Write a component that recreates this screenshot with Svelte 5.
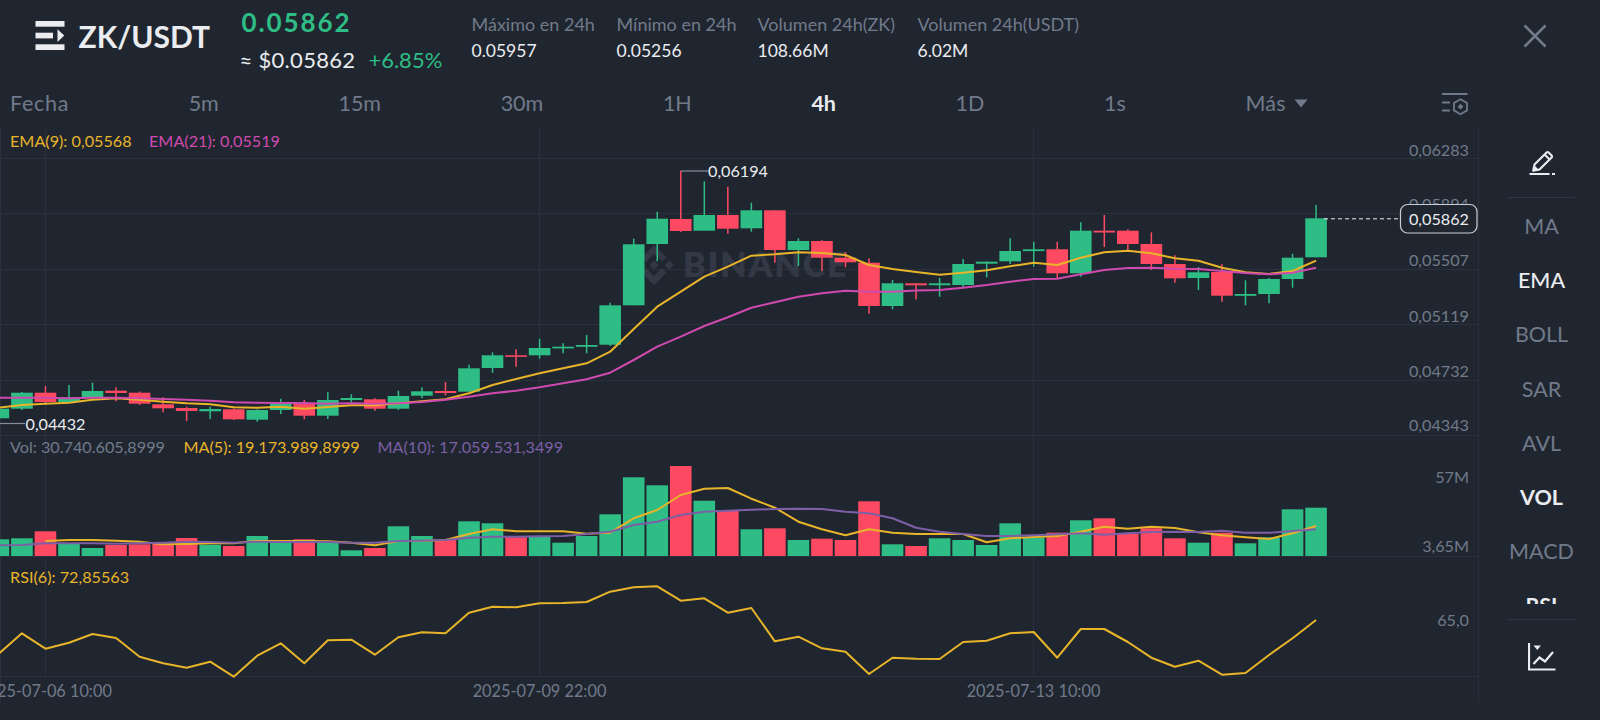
<script>
  const STEP = 23.53;
  const X0 = -1.6;
  const cx = (i) => +(X0 + STEP * i).toFixed(2);
  // [colour, wick top, body top, body bottom, wick bottom]
  const candles = [
    ['g',406,408.7,418.3,420],['g',392,392.7,408.7,410],['r',386,392.7,402,404.7],['g',385,397.3,402,403],
    ['g',382.7,391,397.3,399.3],['r',387.3,390.7,393,401.3],['r',391.5,392.7,403.7,405],['r',397.3,404.3,408.3,412.3],
    ['r',406.7,408,411,421],['g',406.7,409,411.3,419],['r',408.5,409.3,419.3,420],['g',409.3,410,419.7,421.7],
    ['g',398.7,403.3,410,414],['r',400,403,415.7,419.3],['g',392.3,400,415.7,419],['g',394.3,398,400,402.7],
    ['r',398.3,399.3,408.7,410.7],['g',390.7,396,408.7,410],['g',387.3,391.3,395.7,398.3],['r',382,391,393,395.3],
    ['g',364.7,368.3,391.7,392],['g',352.3,355.3,368,372.7],['r',349.3,355.3,356.9,366.7],['g',338.7,348,355.3,358.7],
    ['g',343.3,346.7,348.4,353.3],['g',335,345,346.8,353.3],['g',302.7,305.3,344.7,346],['g',238.7,244.3,305.3,305.3],
    ['g',211.7,218.7,244,261.3],['r',170.7,219,231,232],['g',181.3,215,230.7,230.7],['r',186.7,215,228.7,233.7],
    ['g',202.7,210.3,228.3,231.7],['r',210.3,210.3,250,262.7],['g',238.3,241,250,266],['r',240,241,257.7,271],
    ['r',252,257.7,262.3,267.3],['r',258.3,262.7,306,313.7],['g',280,283.3,306,309.3],['r',283.3,283.3,285.3,299.5],
    ['g',278,283.3,285.2,296.7],['g',259,264,285,287.3],['g',261.7,261.7,263.7,277.3],['g',238.3,251,261.3,264],
    ['g',241.7,249.3,251.1,266.7],['r',241.7,249.3,273.3,278.7],['g',222.3,230.7,273.3,276.7],['r',215,230.7,232.5,247],
    ['r',229.3,230.7,244,250],['r',232.3,244,264,270],['r',255.3,264,278.3,282.7],['g',267,272.3,278,290],
    ['r',264,272,295.7,301.7],['g',280.3,294,295.8,305.3],['g',278,279,294,303.3],['g',253.7,257.7,279,287.7],
    ['g',205,218.3,257.3,257.3]
  ];
  const ema9 = [407.7,405,403.7,402.7,399.7,398.3,399.7,401.7,403.3,404.3,407.3,407.7,406.7,408.7,407,405.3,405.3,403.3,401.3,399.3,393.3,385,379,373.3,368.3,363.3,351.7,329,306.7,291.7,276.7,266.7,255.7,254.3,252.3,253,255,265,269,271.9,274.7,272.7,270.3,266.3,262.7,265,257.7,252.3,250.7,253.3,258.3,260.7,267.7,272.3,274,271,260.7];
  const ema21 = [397.7,397.7,397.7,398.3,397.7,397.7,398.3,399,399.7,400.7,402.3,402.7,403,403,403.7,403.3,403.7,403.3,402,399.7,396.7,393.3,390.7,387.3,383.3,379.3,372.7,360,346.7,336.7,326,317.3,307.7,302.3,296.7,293.3,290.7,291.7,291.7,290.5,290,287.7,285,281.7,279,278.7,274.3,270,268,267.7,268.7,269,271,273,274.3,272.7,267.7];
  const volTop = [539.3,538.3,531.3,543.3,548,545,544.3,543.7,538,544.7,546,536,542.7,539.3,542.7,550.3,548,526.3,536,540,521.3,523.3,537.3,537,542.7,536,514.3,477.3,485.3,466,500.7,510.7,529.3,528.3,540,538.7,540,501.3,544.3,546,538.3,540,545,523.3,537.3,532.7,520.3,518.3,534,528.3,538.3,542.7,532.7,543.3,537.3,509.3,507.7];
  const ma5v = [null,null,243,240,240,242,245,253,252,250,250,243,243,243,244,248,256,243,243,240,222,208,214,214,214,221,218,175,150,105,86,84,116,143,185,208,226,208,218,222,222,222,247,235,231,228,215,200,206,200,204,217,226,232,237,220,198];
  const ma10v = [256,255,250,250,250,251,250,248,245,246,248,245,246,246,246,248,248,243,242,240,233,230,230,229,228,222,215,195,185,165,155,152,149,147,146,147,155,160,175,203,215,222,228,228,226,223,220,224,220,216,215,216,212,218,218,213,208];
  const rsiv = [252,190,236,218,192,204,260,280,293,275,320,257,220,280,211,209,254,202,187,190,128,110,112,100,99,96,65,52,49,92,85,128,114,214,200,235,245,312,263,266,267,216,212,190,186,263,177,177,216,263,290,272,314,309,255,205,150];

  const pts = (arr, map = (v) => v) =>
    arr.map((v, i) => (v === null ? null : `${cx(i)},${(+map(v)).toFixed(1)}`)).filter(Boolean).join(' ');
  const ema9Pts = pts(ema9);
  const ema21Pts = pts(ema21);
  const ma5Pts = pts(ma5v, (v) => 460 + v / 3);
  const ma10Pts = pts(ma10v, (v) => 460 + v / 3);
  const rsiPts = pts(rsiv, (v) => 570 + v / 3);

  const hLines = [158.5, 213.5, 269.5, 324.5, 380.5, 435.5, 556.5, 676.5];
  const vLines = [45.5, 539.5, 1033.5];
  const priceLabels = [['0,06283',150],['0,05507',260],['0,05119',315.5],['0,04732',371],['0,04343',424.5],['57M',477],['3,65M',546],['65,0',620]];
  const dates = [['2025-07-06 10:00',45],['2025-07-09 22:00',539.5],['2025-07-13 10:00',1033.5]];
  const stats = [['Máximo en 24h','0.05957',145],['Mínimo en 24h','0.05256',141],['Volumen 24h(ZK)','108.66M',160],['Volumen 24h(USDT)','6.02M',170]];
  const frames = ['5m','15m','30m','1H','4h','1D','1s'];
  const tools = [['MA',''],['EMA','on'],['BOLL',''],['SAR',''],['AVL',''],['VOL','on bold'],['MACD',''],['RSI','on bold']];
</script>

<div class="page">
  <header class="head">
    <svg class="logo" width="30" height="30" viewBox="0 0 30 30" aria-hidden="true">
      <g fill="#EAECEF">
        <rect x="0.5" y="0" width="29" height="5.7"/>
        <rect x="0.5" y="11.7" width="17.5" height="5.7"/>
        <path d="M22.5 8.300 29.300 14.600 22.500 21z"/>
        <rect x="0.5" y="23.3" width="29" height="5.7"/>
      </g>
    </svg>
    <div class="pair">ZK/USDT</div>
    <div class="price">
      <div class="last">0.05862</div>
      <div class="sub"><span class="fiat">≈ $0.05862</span><span class="pct">+6.85%</span></div>
    </div>
    <div class="stats">
      {#each stats as [k, v, w]}
        <div class="stat" class:w145={w === 145} class:w141={w === 141}>
          <div class="k">{k}</div>
          <div class="v">{v}</div>
        </div>
      {/each}
    </div>
    <svg class="close" width="24" height="24" viewBox="0 0 24 24" aria-hidden="true">
      <path d="M1.5 1.5 22.5 22.5M22.5 1.5 1.5 22.5" stroke="#707A8A" stroke-width="2.6" fill="none"/>
    </svg>
  </header>

  <nav class="tabs">
    <span class="tab date">Fecha</span>
    {#each frames as f}
      <span class="tab" class:active={f === '4h'}>{f}</span>
    {/each}
    <span class="tab more">Más<svg width="14" height="9" viewBox="0 0 14 9" aria-hidden="true"><path d="M0.5 0.5h13L7 8.5z" fill="#707A8A"/></svg></span>
    <svg class="cfg" width="28" height="26" viewBox="0 0 28 26" aria-hidden="true">
      <g fill="none" stroke="#707A8A" stroke-width="1.8">
        <path d="M1 2h25.5M1 10.5h8M1 18.5h8"/>
        <path d="M19.5 7.2 26 11v7.4l-6.5 3.8-6.500-3.800V11z"/>
      </g>
      <path d="M19.5 11.800l2.900 2.900-2.900 2.900-2.900-2.900z" fill="#707A8A"/>
    </svg>
  </nav>

  <div class="main">
    <svg class="chart" width="1479" height="594" viewBox="0 126 1479 594">
      <g stroke="#2B313C" stroke-width="1">
        {#each hLines as y}<line x1="0" x2="1479" y1={y} y2={y}/>{/each}
        {#each vLines as x}<line x1={x} x2={x} y1="126" y2="676"/>{/each}
        <line x1="0.5" x2="0.5" y1="126" y2="702"/>
        <line x1="1478.5" x2="1478.5" y1="126" y2="702"/>
      </g>

      <g class="wm">
        <path transform="translate(634 245) scale(0.316)" d="M38.730 53.200l24.590-24.580 24.600 24.600 14.300-14.310L63.320 0 24.420 38.900zM0 63.310L14.300 49l14.310 14.310-14.310 14.300zM38.730 73.410l24.590 24.590 24.600-24.600 14.310 14.290-38.900 38.910-38.910-38.880zM98 63.310l14.300-14.310 14.310 14.300-14.300 14.310zM77.830 63.300L63.320 48.780 48.810 63.280l14.510 14.500 14.510-14.470z"/>
        <text x="683" y="276.500">BINANCE</text>
      </g>

      {#each candles as [c, wt, bt, bb, wb], i}
        <line class={c === 'g' ? 'wg' : 'wr'} x1={cx(i)} x2={cx(i)} y1={wt} y2={wb}/>
        <rect class={c} x={cx(i) - 10.8} y={bt} width="21.6" height={bb - bt}/>
      {/each}
      {#each volTop as t, i}
        <rect class={candles[i][0]} x={cx(i) - 10.8} y={t} width="21.6" height={556 - t}/>
      {/each}

      <polyline class="ln c9" points={ema9Pts}/>
      <polyline class="ln c21" points={ema21Pts}/>
      <polyline class="ln c9" points={ma5Pts}/>
      <polyline class="ln c10" points={ma10Pts}/>
      <polyline class="ln c9" points={rsiPts}/>

      <path d="M681 171h27" stroke="#848E9C" stroke-width="1.2" fill="none"/>
      <path d="M0 423.500h25" stroke="#848E9C" stroke-width="1.2" fill="none"/>
      <text class="mark" x="708" y="176.500">0,06194</text>
      <text class="mark" x="25.500" y="430">0,04432</text>

      <text class="leg t9" x="10" y="147">EMA(9): 0,05568</text>
      <text class="leg t21" x="149" y="147">EMA(21): 0,05519</text>
      <text class="leg tg" x="10" y="453">Vol: 30.740.605,8999</text>
      <text class="leg t9" x="183.500" y="453">MA(5): 19.173.989,8999</text>
      <text class="leg t10" x="377.500" y="453">MA(10): 17.059.531,3499</text>
      <text class="leg t9" x="10" y="583">RSI(6): 72,85563</text>

      <text class="ax" x="1469" y="210">0,05894</text>
      {#each priceLabels as [t, y]}
        <text class="ax" x="1469" y={y + 6}>{t}</text>
      {/each}
      {#each dates as [t, x]}
        <text class="datel" x={x} y="697">{t}</text>
      {/each}

      <path d="M1324 218.800H1400" stroke="#EAECEF" stroke-width="1" stroke-dasharray="4 3" fill="none"/>
      <rect class="now" x="1400.500" y="204.500" width="76.500" height="28.500" rx="7"/>
      <text class="nowt" x="1469" y="224.500">0,05862</text>
    </svg>

    <aside class="side">
      <div class="ico top">
        <svg width="26" height="26" viewBox="0 0 26 26" aria-hidden="true">
          <g fill="none" stroke="#EAECEF" stroke-width="2.100" stroke-linejoin="round">
            <path d="M5.500 15.500 17.600 3.400a1.400 1.400 0 0 1 2 0l3 3a1.400 1.400 0 0 1 0 2L10.500 20.500l-6.300 1.300z"/>
            <path d="M15.600 5.400l5 5"/>
          </g>
          <path d="M4.500 21.800l1-5.300 4.300 4.200z" fill="#EAECEF"/>
          <path d="M0.500 25h20M23 25h3" stroke="#EAECEF" stroke-width="2.100"/>
        </svg>
      </div>
      <div class="list">
        {#each tools as [t, c]}
          <div class="tool {c}">{t}</div>
        {/each}
      </div>
      <div class="ico bottom">
        <svg width="28" height="28" viewBox="0 0 28 28" aria-hidden="true">
          <path d="M1 0V26.500H27.500" fill="none" stroke="#EAECEF" stroke-width="2.200"/>
          <path d="M5.500 21 11.500 14.500 17 18.500 25 9" fill="none" stroke="#EAECEF" stroke-width="2.200"/>
          <path d="M5.500 2.500h7.500L9.250 7z" fill="#EAECEF"/>
        </svg>
      </div>
    </aside>
  </div>
</div>

<style>
  :global(body) { margin: 0; background: #202630; }
  .page {
    width: 1600px; height: 720px; overflow: hidden; background: #202630;
    font-family: "Lato", "Liberation Sans", sans-serif; color: #EAECEF;
  }
  .head { height: 84px; display: flex; align-items: flex-start; position: relative; }
  .logo { margin: 21px 0 0 34.500px; flex: none; }
  .pair { margin: 17px 0 0 14px; font-size: 30px; font-weight: 700; line-height: 38px; width: 163px; flex: none; }
  .price { width: 230px; flex: none; }
  .last { margin-top: 4px; font-size: 26px; font-weight: 700; line-height: 36px; color: #2EBD85; letter-spacing: 1.900px; }
  .sub { margin: 5px 0 0 -2px; display: flex; gap: 13px; font-size: 22px; line-height: 30px; }
  .fiat { letter-spacing: .3px; }
  .pct { color: #2EBD85; }
  .stats { display: flex; margin-top: 12px; }
  .stat { width: 160px; }
  .w145 { width: 145px; }
  .w141 { width: 141px; }
  .k { font-size: 18px; line-height: 24px; color: #707A8A; white-space: nowrap; }
  .v { font-size: 17.500px; line-height: 24px; margin-top: 3px; }
  .close { position: absolute; left: 1523px; top: 24px; }
  .tabs {
    height: 42px; width: 1308px; display: flex; justify-content: space-between; align-items: flex-start;
    position: relative; padding-left: 10px; box-sizing: border-box;
  }
  .tab { font-size: 21.500px; line-height: 39px; color: #707A8A; }
  .date { letter-spacing: .7px; }
  .active { color: #EAECEF; font-weight: 700; }
  .more { display: flex; align-items: center; gap: 8px; letter-spacing: .3px; }
  .cfg { position: absolute; left: 1440.500px; top: 8px; }
  .main { display: flex; height: 594px; }
  .chart { flex: none; display: block; width: 1479px; }
  .side { flex: 1; display: flex; flex-direction: column; align-items: center; padding-left: 4px; box-sizing: border-box; }
  .ico { width: 67px; display: flex; justify-content: center; box-sizing: border-box; }
  .top { height: 72px; padding-top: 23px; border-bottom: 1px solid #2F3542; }
  .list { width: 100%; height: 406px; overflow: hidden; padding-top: 1px; box-sizing: border-box; }
  .tool { height: 54.200px; line-height: 54.200px; text-align: center; font-size: 21.500px; color: #707A8A; }
  .tool.on { color: #EAECEF; font-weight: 500; }
  .tool.bold { font-weight: 700; }
  .bottom { border-top: 1px solid #2F3542; padding-top: 23px; height: 60px; margin-top: 15px; }
  .g { fill: #2EBD85; }
  .r { fill: #FD4A62; }
  .wg { stroke: #2EBD85; stroke-width: 1.500; }
  .wr { stroke: #FD4A62; stroke-width: 1.500; }
  .ln { fill: none; stroke-width: 2; stroke-linejoin: round; }
  .c9 { stroke: #E8B42A; }
  .c21 { stroke: #CF4AAE; }
  .c10 { stroke: #7D5FA6; }
  .wm { fill: #323845; }
  .wm text { font-family: "Lato", sans-serif; font-weight: 800; font-size: 34px; letter-spacing: 1.900px; }
  .leg { font-size: 16.200px; }
  .t9 { fill: #E8B42A; }
  .t21 { fill: #CF4AAE; }
  .t10 { fill: #7D5FA6; }
  .tg { fill: #707A8A; }
  .ax { font-size: 16.200px; fill: #707A8A; text-anchor: end; }
  .datel { font-size: 16.300px; fill: #707A8A; text-anchor: middle; }
  .mark { font-size: 16.200px; fill: #EAECEF; }
  .now { fill: #202630; stroke: #C9CDD3; stroke-width: 1.200; }
  .nowt { font-size: 16.200px; fill: #EAECEF; text-anchor: end; }
</style>
